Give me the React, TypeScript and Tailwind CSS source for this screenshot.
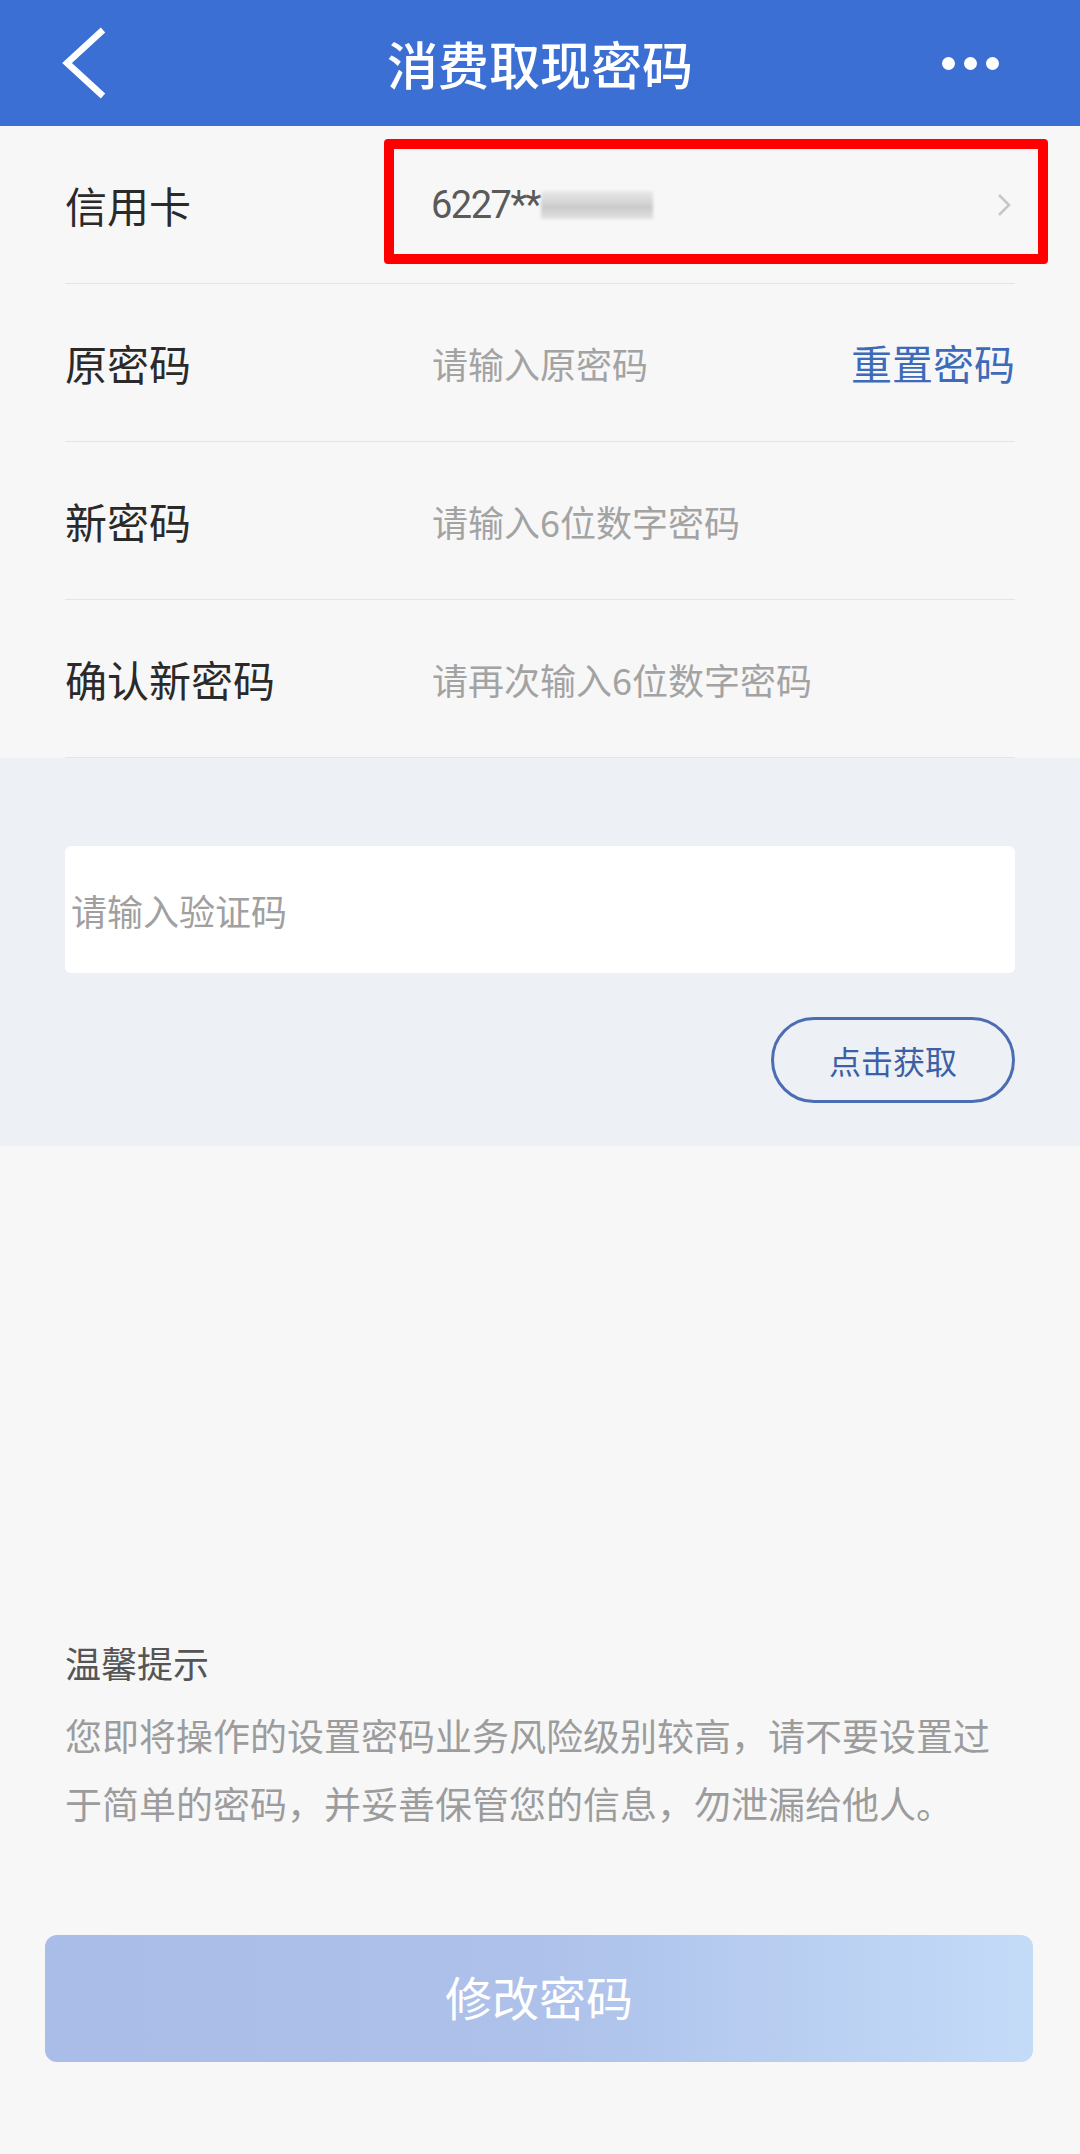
import React from "react";

const rows = [
  { label: "原密码", placeholder: "请输入原密码", action: "重置密码" },
  { label: "新密码", placeholder: "请输入6位数字密码" },
  { label: "确认新密码", placeholder: "请再次输入6位数字密码" },
];

export default function App() {
  return (
    <div className="relative h-[2154px] w-[1080px] bg-[#f7f7f8] font-['Noto_Sans_CJK_SC',sans-serif]">
      {/* 顶部导航 */}
      <div className="grid h-[126px] grid-cols-3 items-center bg-[#3c6fd3]">
        <div className="pl-[62px]">
          <svg width="48" height="80" viewBox="0 0 48 80" fill="none">
            <polyline
              points="41,7 5,40 41,73"
              stroke="white"
              strokeWidth="6.5"
              strokeLinejoin="miter"
            />
          </svg>
        </div>
        <h1 className="justify-self-center whitespace-nowrap text-[51px] font-medium leading-none text-white">
          消费取现密码
        </h1>
        <div className="flex items-center justify-end gap-[9px] pr-[81px]">
          <span className="h-[13px] w-[13px] rounded-full bg-white" />
          <span className="h-[13px] w-[13px] rounded-full bg-white" />
          <span className="h-[13px] w-[13px] rounded-full bg-white" />
        </div>
      </div>

      {/* 表单 */}
      <div className="mx-[65px]">
        <div className="flex h-[158px] items-center border-b border-[#e4e4e6]">
          <div className="w-[366px] shrink-0 text-[42px] leading-none text-[#2a2a2a]">信用卡</div>
          <div className="flex items-center">
            <span className="font-['Roboto',sans-serif] text-[38px] leading-none tracking-[-1.5px] text-[#5a5a5a]">
              6227**
            </span>
            <span className="ml-[1px] h-[28px] w-[112px] bg-[linear-gradient(to_bottom,#e9e9e9,#d3d3d3_45%,#c9c9c9_55%,#e2e2e2)] blur-[1.5px]" />
          </div>
          <svg className="ml-auto mr-[3px]" width="16" height="26" viewBox="0 0 16 26" fill="none">
            <polyline points="3,3 13,13 3,23" stroke="#c6c6c6" strokeWidth="2.5" />
          </svg>
        </div>
        {rows.map((r) => (
          <div key={r.label} className="flex h-[158px] items-center border-b border-[#e4e4e6]">
            <div className="w-[367px] shrink-0 text-[42px] leading-none text-[#2a2a2a]">{r.label}</div>
            <div className="text-[36px] leading-none text-[#a3a3a3]">{r.placeholder}</div>
            {r.action && (
              <div className="ml-auto text-[41px] leading-none text-[#3d6bb9]">{r.action}</div>
            )}
          </div>
        ))}
      </div>

      {/* 验证码 */}
      <div className="bg-[#edf0f4] px-[65px] pb-[43px] pt-[88px]">
        <div className="flex h-[127px] items-center rounded-[6px] bg-white pl-[6px]">
          <span className="text-[36px] leading-none text-[#a0a0a0]">请输入验证码</span>
        </div>
        <div className="mt-[44px] flex justify-end">
          <button className="flex h-[86px] w-[244px] items-center justify-center rounded-full border-[3px] border-[#4a6db3] text-[32px] leading-none text-[#3c5fa5]">
            点击获取
          </button>
        </div>
      </div>

      {/* 温馨提示 */}
      <div className="mx-[65px] mt-[491px]">
        <div className="text-[36px] leading-[50px] text-[#555]">温馨提示</div>
        <p className="mt-[14px] text-[37px] leading-[68px] text-[#9c9c9c]">
          您即将操作的设置密码业务风险级别较高，请不要设置过于简单的密码，并妥善保管您的信息，勿泄漏给他人。
        </p>
      </div>

      <button className="mx-[45px] mt-[98px] flex h-[127px] w-[988px] items-center justify-center rounded-[12px] bg-[linear-gradient(to_right,#a9bde8_0%,#adc1ea_50%,#c4dbf8_100%)] pb-[6px] text-[47px] leading-none text-white">
        修改密码
      </button>

      {/* 标注框 */}
      <div className="absolute left-[384px] top-[139px] h-[125px] w-[664px] rounded-[4px] border-[10px] border-[#ff0000]" />
    </div>
  );
}
